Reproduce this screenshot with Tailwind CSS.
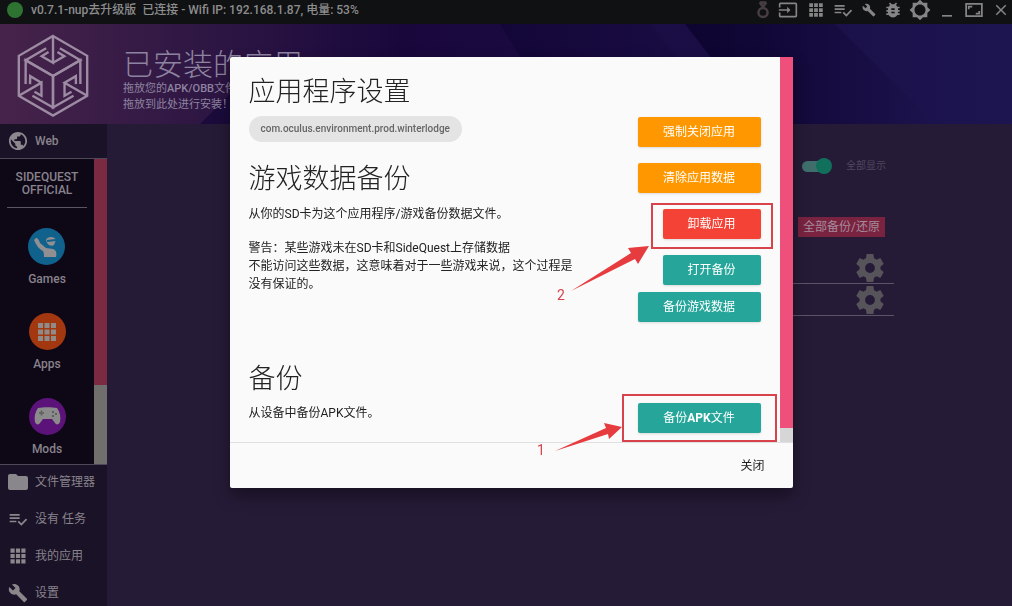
<!DOCTYPE html>
<html lang="zh-CN">

<head>
    <meta charset="UTF-8">
    <meta name="viewport" content="width=device-width, initial-scale=1.0">
    <title>SideQuest</title>
    <script src="https://cdn.jsdelivr.net/npm/@tailwindcss/browser@4"></script>
    <style>
        body {
            font-family: Roboto, "Noto Sans CJK SC", sans-serif;
        }
    </style>
</head>

<body class="h-screen flex flex-col overflow-hidden bg-[#261b37] text-xs text-[#88838c]">

    <!-- Shared icons -->
    <svg class="hidden">
        <symbol id="grid" viewBox="0 0 24 24">
            <path d="M3 3h5v5H3zM9.500 3h5v5h-5zM16 3h5v5h-5zM3 9.500h5v5H3zM9.500 9.500h5v5h-5zM16 9.500h5v5h-5zM3 16h5v5H3zM9.500 16h5v5h-5zM16 16h5v5h-5z" />
        </symbol>
        <symbol id="tasks" viewBox="0 0 24 24">
            <path d="M14 10H2v2h12v-2zm0-4H2v2h12V6zM2 16h8v-2H2v2zm19.500-4.500L23 13l-6.990 7-4.510-4.500L13 14l3.010 3 5.490-5.500z" />
        </symbol>
        <symbol id="wrench" viewBox="0 0 24 24">
            <path d="M22.700 19l-9.100-9.100c.9-2.300.4-5-1.500-6.900-2-2-5-2.400-7.400-1.300L9 6 6 9 1.600 4.700C.4 7.100.9 10.100 2.900 12.100c1.900 1.900 4.600 2.400 6.900 1.500l9.100 9.100c.4.4 1 .4 1.400 0l2.300-2.300c.5-.4.5-1.100.1-1.400z" />
        </symbol>
        <symbol id="gear" viewBox="2 2 20 20">
            <path d="M19.430 12.980c.04-.32.07-.64.07-.98s-.03-.66-.07-.98l2.110-1.650c.19-.15.24-.42.12-.64l-2-3.460c-.12-.22-.39-.3-.61-.22l-2.490 1c-.52-.4-1.080-.73-1.690-.98l-.38-2.650C14.460 2.180 14.250 2 14 2h-4c-.25 0-.46.18-.49.42l-.38 2.650c-.61.25-1.170.59-1.690.98l-2.490-1c-.23-.09-.49 0-.61.22l-2 3.460c-.13.22-.07.49.12.64l2.110 1.650c-.04.32-.07.65-.07.98s.03.66.07.98l-2.110 1.650c-.19.15-.24.42-.12.64l2 3.460c.12.22.39.3.61.22l2.490-1c.52.4 1.080.73 1.690.98l.38 2.650c.03.24.24.42.49.42h4c.25 0 .46-.18.49-.42l.38-2.650c.61-.25 1.170-.59 1.690-.98l2.490 1c.23.09.49 0 .61-.22l2-3.460c.12-.22.07-.49-.12-.64l-2.110-1.650zM12 15.500c-1.930 0-3.500-1.570-3.500-3.500s1.570-3.500 3.500-3.500 3.500 1.570 3.500 3.500-1.570 3.500-3.500 3.500z" />
        </symbol>
        <symbol id="hook" viewBox="0 0 200 234">
            <path d="M100 0v78L67 59l20-12M100 78l33-19-20-12M100 117L20 71l60-35M100 117l80-46-60-35" />
        </symbol>
    </svg>

    <!-- Title bar -->
    <header class="h-6 shrink-0 flex items-center justify-between bg-[#101113] pl-[7px] pb-1">
        <div class="flex items-center">
            <span class="size-4 rounded-full bg-[#2e7331] mr-2"></span>
            <span class="font-medium text-[#8d8d8e] whitespace-pre">v0.7.1-nup去升级版  已连接 - Wifi IP: 192.168.1.87, 电量: 53%</span>
        </div>
        <div class="flex items-center fill-[#858586]">
            <button aria-label="Record" class="w-[22px] flex justify-center"><svg class="size-5 fill-none stroke-[#473e42] stroke-3" viewBox="0 0 24 24"><circle cx="12" cy="15" r="5.500" /><path d="M8 3l4 5 4-5M8 3h8" /></svg></button>
            <button aria-label="Open" class="w-7 flex justify-center"><svg class="size-5" viewBox="0 0 24 24"><path d="M21 3H3c-1.100 0-2 .9-2 2v4h2V5h18v14H3v-4H1v4c0 1.100.9 2 2 2h18c1.100 0 2-.9 2-2V5c0-1.100-.9-2-2-2zM11 16l4-4-4-4v3H1v2h10v3z" /></svg></button>
            <button aria-label="Apps" class="w-7 flex justify-center"><svg class="size-[18px]"><use href="#grid" /></svg></button>
            <button aria-label="Tasks" class="w-[26px] flex justify-center"><svg class="size-5"><use href="#tasks" /></svg></button>
            <button aria-label="Settings" class="w-[26px] flex justify-center"><svg class="size-[14px]"><use href="#wrench" /></svg></button>
            <button aria-label="Debug" class="w-[22px] flex justify-center"><svg class="size-5" viewBox="0 0 24 24"><path d="M20 8h-2.810c-.45-.78-1.070-1.450-1.820-1.960L17 4.410 15.590 3l-2.170 2.170C12.960 5.060 12.490 5 12 5c-.49 0-.96.06-1.410.17L8.410 3 7 4.410l1.620 1.630C7.880 6.550 7.260 7.220 6.810 8H4v2h2.090c-.05.33-.09.66-.09 1v1H4v2h2v1c0 .34.04.67.09 1H4v2h2.810c1.040 1.790 2.970 3 5.190 3s4.150-1.210 5.190-3H20v-2h-2.090c.05-.33.09-.66.09-1v-1h2v-2h-2v-1c0-.34-.04-.67-.09-1H20V8zm-6 8h-4v-2h4v2zm0-4h-4v-2h4v2z" /></svg></button>
            <button aria-label="Theme" class="w-8 flex justify-center"><svg class="size-[22px]" viewBox="0 0 24 24"><path d="M20 8.690V4h-4.690L12 .69 8.690 4H4v4.690L.69 12 4 15.310V20h4.690L12 23.310 15.310 20H20v-4.690L23.310 12 20 8.690zM12 18c-3.310 0-6-2.690-6-6s2.690-6 6-6 6 2.690 6 6-2.690 6-6 6z" /></svg></button>
            <button aria-label="Minimize" class="w-[22px] flex justify-center"><svg class="size-5" viewBox="0 0 24 24"><path d="M6 18h12v2H6z" /></svg></button>
            <button aria-label="Maximize" class="w-8 flex justify-center"><svg class="w-[18px] h-[14px] fill-none stroke-[#858586] stroke-2" viewBox="0 0 20 16"><path d="M1 1h18v14H1zM4 7V4h4M16 9v3h-4" /></svg></button>
            <button aria-label="Close" class="w-[22px] flex justify-center"><svg class="size-[18px]" viewBox="0 0 24 24"><path d="M19 6.410L17.590 5 12 10.590 6.410 5 5 6.410 10.590 12 5 17.590 6.410 19 12 13.410 17.590 19 19 17.590 13.410 12z" /></svg></button>
        </div>
    </header>

    <!-- Banner -->
    <section class="relative h-[100px] shrink-0 flex items-center pt-[3px] bg-linear-to-r from-[#46234a] via-[#19073c] via-40% to-[#1c1550]">
        <svg class="absolute inset-0 size-full" viewBox="0 0 1012 100" preserveAspectRatio="none">
            <defs>
                <linearGradient id="fold">
                    <stop offset="0" stop-color="#0d0430" />
                    <stop offset="1" stop-color="#0d0430" stop-opacity="0" />
                </linearGradient>
            </defs>
            <path d="M200 100L240 60V100z" fill="#0f0538" fill-opacity=".6" />
            <path d="M500 0h150l80 100H560z" fill="url(#fold)" fill-opacity=".5" />
            <path d="M685 0h150l100 100H762z" fill="url(#fold)" />
        </svg>
        <svg class="relative w-[70px] h-20 ml-[18px] fill-none stroke-[#9c8ba3] stroke-7 overflow-visible" viewBox="0 0 200 234">
            <path d="M100 0l100 58v117l-100 58L0 175V58z" />
            <use href="#hook" width="200" height="234" />
            <use href="#hook" width="200" height="234" transform="rotate(120 100 117)" />
            <use href="#hook" width="200" height="234" transform="rotate(240 100 117)" />
        </svg>
        <div class="relative ml-[35px] mt-[10px] text-[11px] leading-4 text-[#8e84a0]">
            <h1 class="text-3xl leading-8 font-light">已安装的应用</h1>
            <p>拖放您的<b class="font-medium">APK/OBB</b>文件<br>拖放到此处进行安装！</p>
        </div>
    </section>

    <div class="flex-1 min-h-0 flex">
        <!-- Sidebar -->
        <aside class="w-[107px] shrink-0 flex flex-col bg-[#1a1226]">
            <a href="#" class="h-[34px] shrink-0 flex items-center gap-[7px] pl-2 font-medium">
                <svg class="size-5 fill-[#8b888e]" viewBox="1 1 22 22"><path d="M12 2C6.480 2 2 6.480 2 12s4.480 10 10 10 10-4.480 10-10S17.520 2 12 2zm-1 17.930c-3.950-.49-7-3.850-7-7.930 0-.62.08-1.210.21-1.790L9 15v1c0 1.100.9 2 2 2v1.930zm6.900-2.540c-.26-.81-1-1.390-1.900-1.390h-1v-3c0-.55-.45-1-1-1H8v-2h2c.55 0 1-.45 1-1V7h2c1.100 0 2-.9 2-2v-.41c2.930 1.190 5 4.060 5 7.410 0 2.080-.8 3.970-2.100 5.390z" /></svg>
                Web
            </a>
            <div class="h-[307px] shrink-0 flex border-y border-[#4e4858] bg-[#0e0716]">
                <nav class="flex-1 flex flex-col items-center px-[7px] font-medium">
                    <h2 class="w-full pt-3 pb-[10px] mb-5 text-center leading-[13px] border-b border-[#5a5560]">SIDEQUEST<br>OFFICIAL</h2>
                    <a href="#" class="h-[85px] shrink-0 flex flex-col items-center gap-[6px]">
                        <svg class="size-[37px]" viewBox="0 0 37 37">
                            <circle cx="18.500" cy="18.500" r="18.500" fill="#10618c" />
                            <path d="M8 10c2 0 3 2 4 5l6 5 7 1c3 1 4 3 3 8H16c0-3 0-4-1-6-4-2-7-6-9-11z" fill="#928f92" />
                            <path d="M18 12c1-4 9-4 10 0l-2 5c-3 2-7 0-8-5z" fill="#928f92" />
                            <path d="M19 13l9-1" stroke="#10618c" stroke-width="2" />
                        </svg>
                        Games
                    </a>
                    <a href="#" class="h-[85px] shrink-0 flex flex-col items-center gap-[6px]">
                        <span class="size-[37px] rounded-full bg-[#a33710] flex items-center justify-center"><svg class="size-6 fill-[#8f8b88]"><use href="#grid" /></svg></span>
                        Apps
                    </a>
                    <a href="#" class="shrink-0 flex flex-col items-center gap-[6px]">
                        <svg class="size-[37px]" viewBox="0 0 37 37">
                            <circle cx="18.500" cy="18.500" r="18.500" fill="#5c1379" />
                            <path d="M9 10c5-1 14-1 19 0 3 4 4 9 3 14-1 3-4 3-5 1l-3-4h-9l-3 4c-1 2-4 2-5-1-1-5 0-10 3-14z" fill="#8b8b8b" />
                            <path d="M10 15h5M12.500 12.500v5" stroke="#5e5e5e" stroke-width="1.500" />
                            <path d="M23 13h2v2h-2zM26 15h2v2h-2zM23 17h2v2h-2z" fill="#5e5e5e" />
                        </svg>
                        Mods
                    </a>
                </nav>
                <div class="w-[13px] bg-[#706f6d]">
                    <div class="h-[74%] bg-[#7c2a42]"></div>
                </div>
            </div>
            <nav class="flex flex-col fill-[#89868c]">
                <a href="#" class="h-[37px] shrink-0 flex items-center gap-[7px] pl-2 pb-[3px]">
                    <svg class="size-5" viewBox="2 2 20 20"><path d="M10 4H4c-1.100 0-1.990.9-1.990 2L2 18c0 1.100.9 2 2 2h16c1.100 0 2-.9 2-2V8c0-1.100-.9-2-2-2h-8l-2-2z" /></svg>
                    文件管理器
                </a>
                <a href="#" class="h-[37px] shrink-0 flex items-center gap-[7px] pl-2 pb-[3px]"><svg class="size-5"><use href="#tasks" /></svg>没有 任务</a>
                <a href="#" class="h-[37px] shrink-0 flex items-center gap-[7px] pl-2 pb-[3px]"><svg class="size-5"><use href="#grid" /></svg>我的应用</a>
                <a href="#" class="h-[37px] shrink-0 flex items-center gap-[7px] pl-2 pb-[3px]"><svg class="size-5"><use href="#wrench" /></svg>设置</a>
            </nav>
        </aside>

        <!-- Installed apps -->
        <main class="flex-1 pt-8 pr-[118px]">
            <label class="flex items-center justify-end pr-2 text-[10px] leading-5 text-[#51485f]">
                <input type="checkbox" checked class="peer sr-only">
                <span class="w-[30px] h-4 flex items-center mr-[14px]">
                    <span class="flex-1 h-[11px] rounded-l-full bg-[#3f6f6c]"></span>
                    <span class="size-4 rounded-full bg-[#10705c] -ml-[5px]"></span>
                </span>
                全部显示
            </label>
            <div class="flex justify-end pr-[9px] mt-[41px]">
                <button class="px-[5px] h-5 leading-5 bg-[#7a2340] text-[#a48c9b]">全部备份/还原</button>
            </div>
            <ul class="w-4/5 ml-auto mt-[15px] fill-[#56535a]">
                <li class="h-8 flex items-center justify-end pr-[10px] border-b border-[#5c5567]"><button aria-label="App settings"><svg class="block size-7"><use href="#gear" /></svg></button></li>
                <li class="h-8 flex items-center justify-end pr-[10px] border-b border-[#5c5567]"><button aria-label="App settings"><svg class="block size-7"><use href="#gear" /></svg></button></li>
            </ul>
        </main>
    </div>

    <!-- App settings modal -->
    <div class="fixed inset-0 flex justify-center items-start pt-[57px] pl-[10px]">
        <div role="dialog" class="relative w-[563px] bg-[#fafafa] text-[#222] rounded-xs shadow-[0_8px_16px_rgba(0,0,0,0.4)]">
            <div class="flex h-[385px]">
                <div class="flex-1 px-[19px] pt-[17px] overflow-hidden">
                    <section class="flex justify-between">
                        <div class="leading-[18px]">
                            <h2 class="text-[27px] leading-9 font-light">应用程序设置</h2>
                            <span class="inline-block mt-[6px] px-3 h-[26px] leading-[26px] rounded-full bg-[#e4e4e4] text-[10px] font-medium text-[#666]">com.oculus.environment.prod.winterlodge</span>
                            <h2 class="mt-[19px] text-[27px] leading-9 font-light">游戏数据备份</h2>
                            <p class="mt-2">从你的SD卡为这个应用程序/游戏备份数据文件。</p>
                            <p class="mt-4">警告：某些游戏未在SD卡和SideQuest上存储数据<br>不能访问这些数据，这意味着对于一些游戏来说，这个过程是<br>没有保证的。</p>
                        </div>
                        <div class="flex flex-col items-end gap-4 pt-[43px] text-white">
                            <button class="w-[123px] h-[30px] rounded-xs bg-[#ff9800] shadow">强制关闭应用</button>
                            <button class="w-[123px] h-[30px] rounded-xs bg-[#ff9800] shadow">清除应用数据</button>
                            <div class="relative">
                                <button class="w-[98px] h-[30px] rounded-xs bg-[#f44336] shadow">卸载应用</button>
                                <span class="absolute -inset-x-3 -top-[6px] -bottom-[10px] border-2 border-[#d8434b]"></span>
                            </div>
                            <button class="w-[98px] h-[30px] rounded-xs bg-[#26a69a] shadow">打开备份</button>
                            <button class="w-[123px] h-[30px] rounded-xs bg-[#26a69a] shadow -mt-[9px]">备份游戏数据</button>
                        </div>
                    </section>
                    <section class="flex justify-between mt-[39px]">
                        <div class="leading-[18px]">
                            <h2 class="text-[27px] leading-9 font-light">备份</h2>
                            <p class="mt-[7px]">从设备中备份APK文件。</p>
                        </div>
                        <div class="relative mt-[42px]">
                            <button class="block w-[123px] h-[30px] rounded-xs bg-[#26a69a] shadow text-white">备份<b>APK</b>文件</button>
                            <span class="absolute -inset-x-4 -inset-y-[9px] border-2 border-[#d8434b]"></span>
                        </div>
                    </section>
                </div>
                <div class="w-[13px] bg-[#d6d6d6]">
                    <div class="h-[371px] bg-[#ee4f7b]"></div>
                </div>
            </div>
            <footer class="h-[46px] flex justify-end items-center border-t border-[#e0e0e0] pr-7">
                <button>关闭</button>
            </footer>

            <!-- Step arrows -->
            <svg class="absolute inset-0 size-full pointer-events-none fill-[#e63c3f]" viewBox="0 0 563 431">
                <path d="M341 234L401 196 398 191 419 189 408 207 405 202z" />
                <path d="M325 394L376 371 374 366 392 370 379 382 378 377z" />
                <text x="327" y="243" font-size="14" fill="#d8434b">2</text>
                <text x="307" y="398" font-size="14" fill="#d8434b">1</text>
            </svg>
        </div>
    </div>
</body>

</html>
